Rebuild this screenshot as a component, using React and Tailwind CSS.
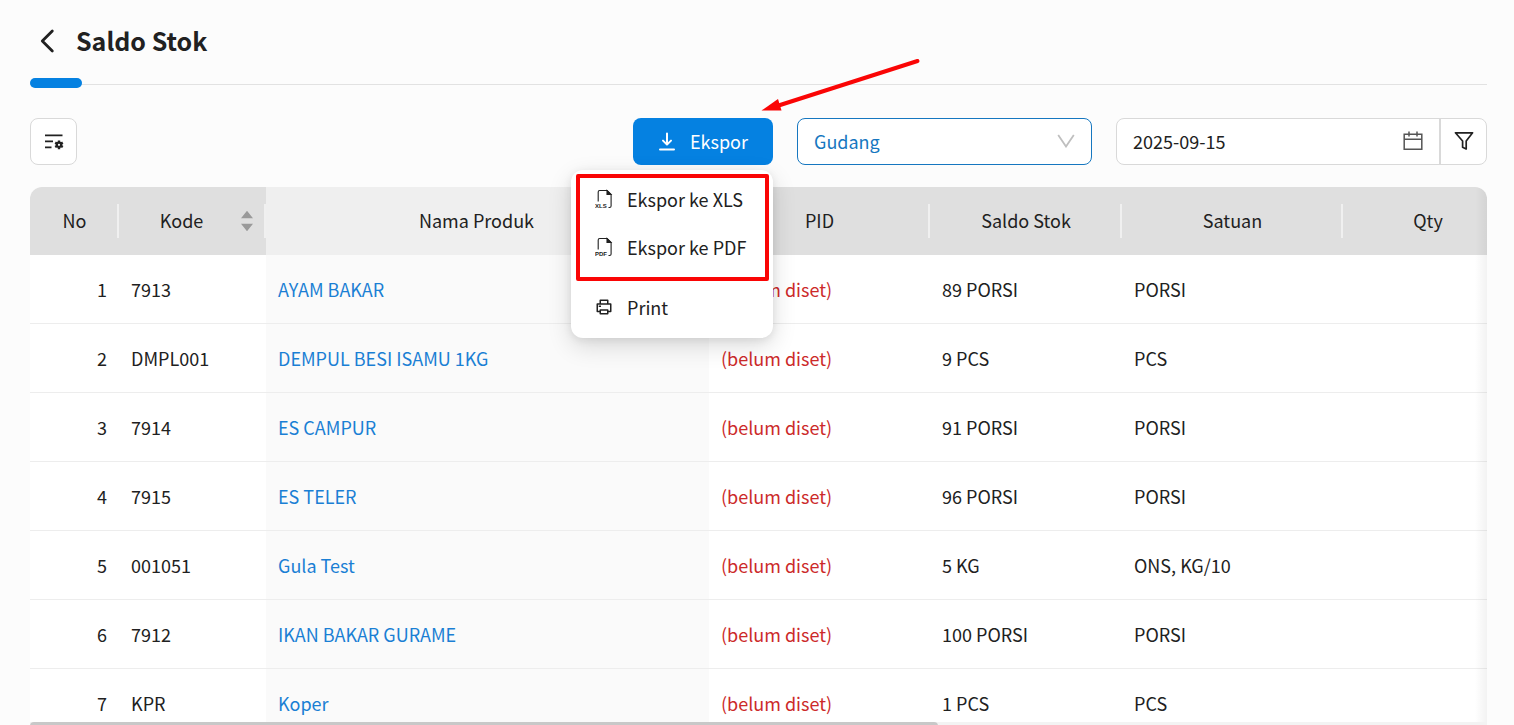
import React from "react";
import { RiPrinterLine } from "react-icons/ri";

const rows = [
  ["7913", "AYAM BAKAR", "89 PORSI", "PORSI"],
  ["DMPL001", "DEMPUL BESI ISAMU 1KG", "9 PCS", "PCS"],
  ["7914", "ES CAMPUR", "91 PORSI", "PORSI"],
  ["7915", "ES TELER", "96 PORSI", "PORSI"],
  ["001051", "Gula Test", "5 KG", "ONS, KG/10"],
  ["7912", "IKAN BAKAR GURAME", "100 PORSI", "PORSI"],
  ["KPR", "Koper", "1 PCS", "PCS"],
];

function BackIcon() {
  return (
    <svg width="16" height="24" viewBox="0 0 16 24" fill="none" stroke="currentColor" strokeWidth="2.8" strokeLinecap="round" strokeLinejoin="round" aria-hidden="true">
      <path d="M13.3 2 3.3 12l10 10" />
    </svg>
  );
}

function ColumnsIcon() {
  return (
    <svg width="20" height="18" viewBox="0 0 20 18" fill="none" stroke="currentColor" strokeWidth="1.8" aria-hidden="true">
      <path d="M1 2.4h17.5M1 8.4h8M1 14.4h6.5" />
      <circle cx="15" cy="11.8" r="2.2" strokeWidth="2.2" />
      <path d="M15 7.4v2M15 14.2v2M11.2 9.6l1.7 1M17.1 13l1.7 1M11.2 14l1.7-1M17.1 10.6l1.7-1" strokeWidth="2.4" />
    </svg>
  );
}

function DownloadIcon() {
  return (
    <svg width="18" height="20" viewBox="0 0 18 20" fill="none" stroke="currentColor" strokeWidth="2" strokeLinecap="round" strokeLinejoin="round" aria-hidden="true">
      <path d="M9 2.5v11M5 9.6l4 4 4-4M2 18.4h14" />
    </svg>
  );
}

function FileIcon({ label }) {
  return (
    <svg width="18" height="20" viewBox="0 0 18 20" fill="none" stroke="currentColor" strokeWidth="1.1" aria-hidden="true">
      <path d="M3.2 12.5V3c0-.9.5-1.5 1.5-1.5h7.4l4 4V17c0 .9-.6 1.5-1.6 1.5h-1" />
      <path d="M12 1.5v4h4z" fill="currentColor" />
      <text x="0" y="18.8" fontSize="6" fontWeight="700" fill="currentColor" stroke="none" fontFamily="Liberation Sans, sans-serif">{label}</text>
    </svg>
  );
}

function CalendarIcon() {
  return (
    <svg width="20" height="20" viewBox="0 0 20 20" fill="none" stroke="currentColor" strokeWidth="1.5" aria-hidden="true">
      <path d="M1.2 3.2h17.6v15H1.2zM1.2 8.2h17.6M6 .6v4.8M14 .6v4.8" />
    </svg>
  );
}

function FilterIcon() {
  return (
    <svg width="20" height="20" viewBox="0 0 20 20" fill="none" stroke="currentColor" strokeWidth="1.7" strokeLinejoin="round" aria-hidden="true">
      <path d="M1.4 1.8h17.2L12.2 10v8l-3.6-1.8V10z" />
    </svg>
  );
}

function ChevronIcon() {
  return (
    <svg className="pointer-events-none absolute top-4 right-4 text-[#bfbfbf]" width="20" height="14" viewBox="0 0 20 14" fill="none" stroke="currentColor" strokeWidth="1.8" aria-hidden="true">
      <path d="M2.2 1 10 12.5 17.8 1" />
    </svg>
  );
}

function SortIcon() {
  return (
    <svg width="14" height="22" viewBox="0 0 14 22" fill="#9a9a9a" aria-hidden="true">
      <path d="M7 .8 13 8.2H1zM7 21.2 1 13.8h12z" />
    </svg>
  );
}

function HeadCell({ children, sorter, light }) {
  return (
    <th className={`h-[68px] p-0 font-normal ${light ? "bg-[#efefef]" : "bg-[#dfdfdf]"}`}>
      <div className={`flex h-[34px] items-center border-r-2 pr-[10px] pl-3 ${light ? "border-[#efefef]" : "border-[#f0f0f0]"}`}>
        <span className="flex-1 pb-0.5">{children}</span>
        {sorter && (
          <button type="button" aria-label="Urutkan" className="ml-2">
            <SortIcon />
          </button>
        )}
        {light && <span className="w-[22px]" />}
      </div>
    </th>
  );
}

function ExportMenu() {
  const item = "flex h-12 w-full items-center gap-[14px] px-6 pb-0.5 text-left";
  return (
    <div className="relative z-20">
      <button type="button" aria-haspopup="menu" aria-expanded="true" className="flex h-[47px] w-[140px] items-center justify-center gap-[14px] rounded-lg bg-[#0581e1] pb-0.5 text-white">
        <DownloadIcon />
        Ekspor
      </button>
      <div role="menu" className="absolute top-[52px] right-0 w-[202px] rounded-xl bg-white py-[6px] shadow-[0_8px_24px_rgba(0,0,0,0.14),0_2px_8px_rgba(0,0,0,0.08)]">
        <button type="button" role="menuitem" className={item}><FileIcon label="XLS" />Ekspor ke XLS</button>
        <button type="button" role="menuitem" className={item}><FileIcon label="PDF" />Ekspor ke PDF</button>
        <button type="button" role="menuitem" className={`${item} mt-3`}><RiPrinterLine size={18} />Print</button>
      </div>
      <div className="pointer-events-none absolute top-14 right-1 h-[107px] w-[193px] rounded-xs border-4 border-[#fa0505]" />
      <svg className="pointer-events-none absolute -top-[60px] left-[128px]" width="160" height="56" viewBox="0 0 160 56" aria-hidden="true">
        <path d="M156.500 3 16 48" stroke="#fa0505" strokeWidth="4" strokeLinecap="round" />
        <path d="M.5 52.500 17 41l3.500 11.500z" fill="#fa0505" />
      </svg>
    </div>
  );
}

export default function App() {
  return (
    <main className="flex h-screen flex-col overflow-hidden bg-[#fcfcfc] pr-[27px] pl-[30px] font-['Noto_Sans_CJK_SC',sans-serif] text-[18px] leading-7 text-[#212121]">
      <header className="relative flex h-[85px] shrink-0 items-center gap-[21px] border-b border-[#e2e2e2] pb-0.5 pl-[9px]">
        <a href="#kembali" aria-label="Kembali"><BackIcon /></a>
        <h1 className="pb-0.5 text-[25px] leading-8 font-bold">Saldo Stok</h1>
        <span className="absolute -bottom-1 left-0 h-[10px] w-[52px] rounded-full bg-[#0581e1]" />
      </header>

      <div className="mt-[33px] flex shrink-0 items-center">
        <button type="button" aria-label="Atur kolom" className="flex size-[47px] items-center justify-center rounded-lg border border-[#d9d9d9] bg-white">
          <ColumnsIcon />
        </button>
        <div className="ml-auto flex items-center gap-6">
          <ExportMenu />
          <div className="relative">
            <select aria-label="Gudang" className="h-[47px] w-[295px] appearance-none rounded-lg border border-[#1677c0] bg-white px-4 pb-0.5 text-[#1677c0]">
              <option>Gudang</option>
            </select>
            <ChevronIcon />
          </div>
          <div className="flex h-[47px] w-[371px] rounded-lg border border-[#d9d9d9] bg-white">
            <input aria-label="Tanggal" defaultValue="2025-09-15" className="min-w-0 flex-1 bg-transparent pb-0.5 pl-4 outline-none" />
            <button type="button" aria-label="Pilih tanggal" className="px-4 pb-0.5 text-[#555]"><CalendarIcon /></button>
            <button type="button" aria-label="Filter" className="flex w-[47px] items-center justify-center border-l-2 border-[#d9d9d9] pb-0.5"><FilterIcon /></button>
          </div>
        </div>
      </div>

      <div className="relative mt-[22px] min-h-0 flex-1 overflow-hidden rounded-t-xl bg-white">
        <table className="w-[2338px] table-fixed border-separate border-spacing-0">
          <colgroup>
            <col className="w-[89px]" />
            <col className="w-[147px]" />
            <col className="w-[443px]" />
            <col className="w-[221px]" />
            <col className="w-[192px]" />
            <col className="w-[221px]" />
            <col className="w-[170px]" />
            <col />
          </colgroup>
          <thead>
            <tr>
              <HeadCell>No</HeadCell>
              <HeadCell sorter>Kode</HeadCell>
              <HeadCell light>Nama Produk</HeadCell>
              <HeadCell>PID</HeadCell>
              <HeadCell>Saldo Stok</HeadCell>
              <HeadCell>Satuan</HeadCell>
              <HeadCell>Qty</HeadCell>
              <HeadCell />
            </tr>
          </thead>
          <tbody className="[&_td]:h-[69px] [&_td]:border-b [&_td]:border-[#ededed] [&_td]:px-3 [&_td]:py-0">
            {rows.map(([code, name, stock, unit], i) => (
              <tr key={code}>
                <td className="text-right">{i + 1}</td>
                <td>{code}</td>
                <td className="bg-[#fafafa]"><a href={`#${code}`} className="text-[#1a7fd4]">{name}</a></td>
                <td className="text-[#cc2a2a]">(belum diset)</td>
                <td>{stock}</td>
                <td>{unit}</td>
                <td />
                <td />
              </tr>
            ))}
          </tbody>
        </table>
        <div className="pointer-events-none absolute inset-y-0 right-0 w-3 bg-linear-to-r from-transparent to-black/5" />
      </div>
      <div className="h-[3px] shrink-0 overflow-hidden bg-[#f3f3f3]">
        <div className="h-2 w-[62.3%] rounded-full bg-[#c8c8c8]" />
      </div>
    </main>
  );
}
